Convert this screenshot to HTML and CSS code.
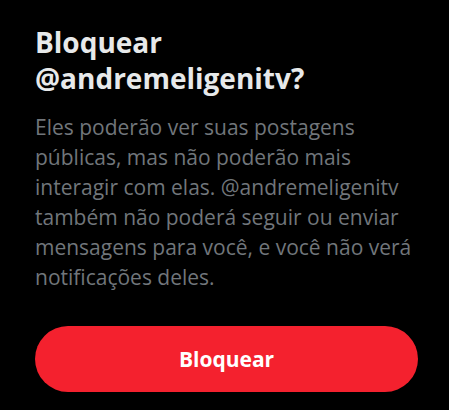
FILE: index.html
```html
<!DOCTYPE html>
<html lang="pt-BR">
<head>
<meta charset="utf-8">
<title>Bloquear</title>
<link rel="stylesheet" href="styles.css">
</head>
<body>
<div class="dialog">
  <h1 class="dialog-title">Bloquear @andremeligenitv?</h1>
  <p class="dialog-text">Eles poderão ver suas postagens públicas, mas não poderão mais interagir com elas. @andremeligenitv também não poderá seguir ou enviar mensagens para você, e você não verá notificações deles.</p>
  <button class="btn-block" type="button">Bloquear</button>
</div>
</body>
</html>
```

FILE: styles.css
```css
html, body {
  margin: 0;
  background: #000;
}

.dialog {
  display: flex;
  flex-direction: column;
  padding: 24px 31px 0 35px;
  font-family: "Open Sans", "Noto Sans", sans-serif;
}

.dialog-title {
  margin: 0;
  font-size: 28px;
  line-height: 36px;
  font-weight: 700;
  color: #e7e9ea;
  width: 300px;
}

.dialog-text {
  margin: 16px 0 0;
  font-size: 21px;
  line-height: 30px;
  font-weight: 400;
  color: #71767b;
}

.btn-block {
  margin-top: 34px;
  height: 66px;
  border: 0;
  border-radius: 33px;
  background: #f4212e;
  color: #fff;
  font-family: inherit;
  font-size: 21px;
  font-weight: 700;
}
```
